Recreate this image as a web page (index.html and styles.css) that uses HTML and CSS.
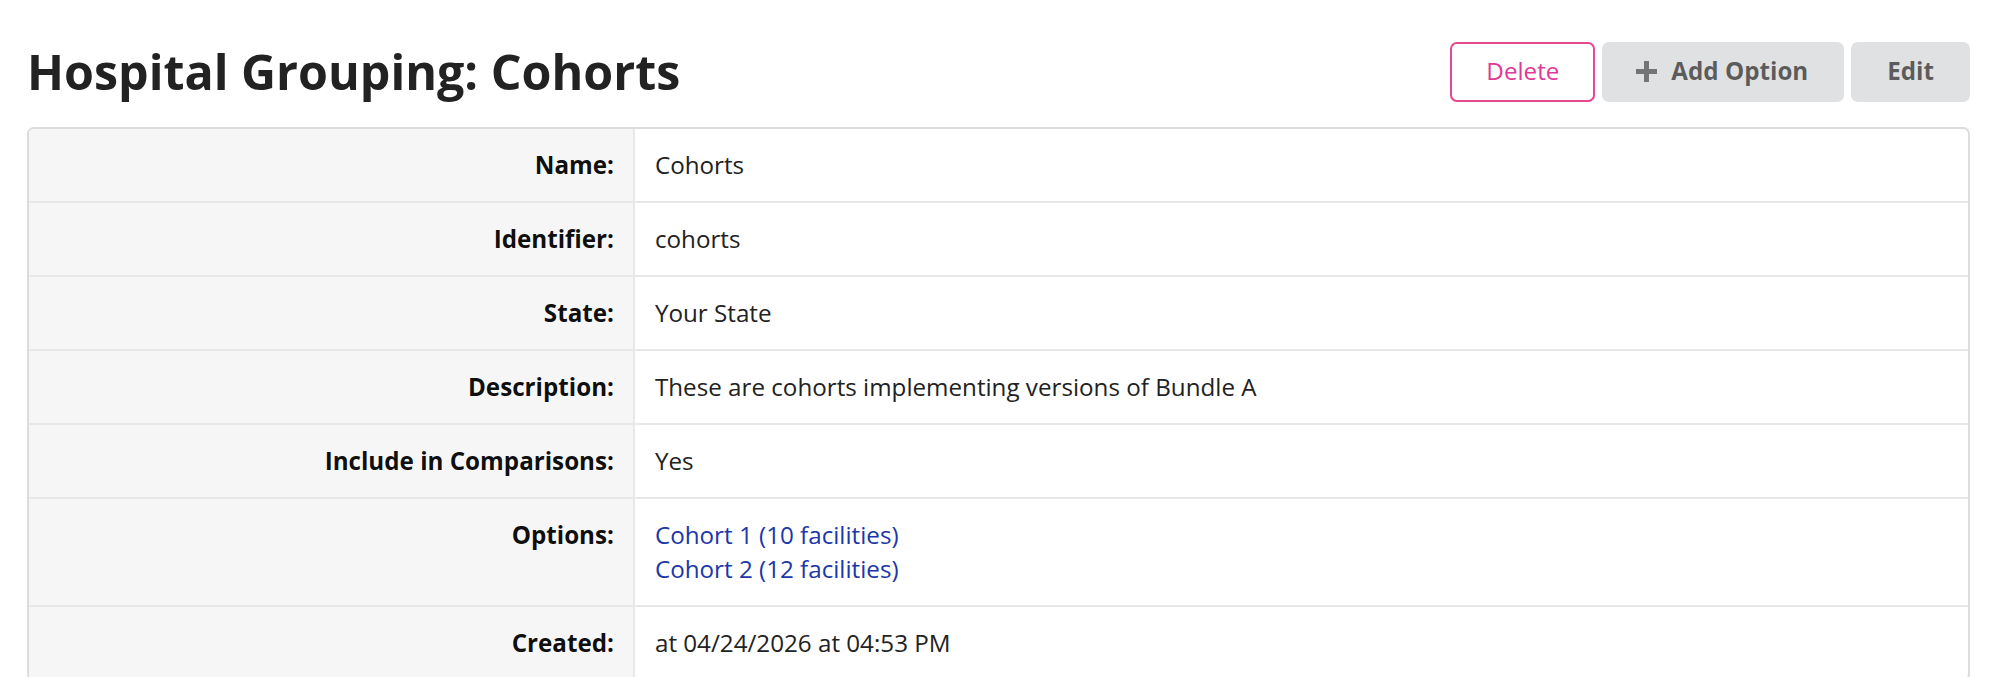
FILE: index.html
```html
<!DOCTYPE html>
<html lang="en">
<head>
<meta charset="utf-8">
<title>Hospital Grouping: Cohorts</title>
<link rel="stylesheet" href="styles.css">
</head>
<body>
<div class="page">
  <div class="page-header">
    <h1 class="title">Hospital Grouping: Cohorts</h1>
    <div class="actions">
      <button class="btn btn-basic-pink">Delete</button>
      <button class="btn btn-grey">
        <svg class="icon-plus" viewBox="0 0 22 22" aria-hidden="true"><path d="M8.4 0h5.2v8.4H22v5.2h-8.4V22H8.4v-8.4H0V8.4h8.4z" fill="currentColor"/></svg>
        Add Option
      </button>
      <button class="btn btn-grey">Edit</button>
    </div>
  </div>
  <table class="def-table">
    <tbody>
      <tr><th>Name:</th><td>Cohorts</td></tr>
      <tr><th>Identifier:</th><td>cohorts</td></tr>
      <tr><th>State:</th><td>Your State</td></tr>
      <tr><th>Description:</th><td>These are cohorts implementing versions of Bundle A</td></tr>
      <tr><th>Include in Comparisons:</th><td>Yes</td></tr>
      <tr><th>Options:</th><td><a href="#" class="link">Cohort 1 (10 facilities)</a><br><a href="#" class="link">Cohort 2 (12 facilities)</a></td></tr>
      <tr><th>Created:</th><td>at 04/24/2026 at 04:53 PM</td></tr>
    </tbody>
  </table>
</div>
</body>
</html>
```

FILE: styles.css
```css
html, body {
  margin: 0;
  padding: 0;
  background: #ffffff;
}
body {
  font-family: "Open Sans", "Liberation Sans", sans-serif;
  font-size: 24.2px;
  color: rgba(0, 0, 0, 0.87);
}
.page {
  padding: 41px 29px 0 27px;
}
.page-header {
  display: flex;
  align-items: center;
  justify-content: space-between;
  margin-bottom: 25px;
}
.title {
  margin: 0;
  font-size: 48.4px;
  font-weight: 700;
  line-height: 61px;
  color: #222222;
}
.actions {
  display: flex;
  gap: 7px;
}
.btn {
  display: inline-flex;
  align-items: center;
  height: 60px;
  padding: 0 36px;
  border: none;
  border-radius: 6.8px;
  font-family: "Open Sans", "Liberation Sans", sans-serif;
  font-size: 24.2px;
  line-height: 1;
  cursor: pointer;
}
.btn-basic-pink {
  background: #ffffff;
  color: #e03997;
  font-weight: 400;
  box-shadow: inset 0 0 0 2px #e8488f;
}
.btn-grey {
  background: #e0e1e2;
  color: rgba(0, 0, 0, 0.6);
  font-weight: 700;
}
.icon-plus {
  width: 21px;
  height: 21px;
  margin: 0 14px 0 -2px;
  opacity: 0.8;
}
.def-table {
  width: 100%;
  border-collapse: separate;
  border-spacing: 0;
  border: 2px solid #dcdcdd;
  border-radius: 6.8px;
  overflow: hidden;
}
.def-table th,
.def-table td {
  padding: 19px 19px;
  line-height: 34px;
  vertical-align: top;
  border-top: 2px solid #e8e8e9;
}
.def-table tr:first-child th,
.def-table tr:first-child td {
  border-top: none;
}
.def-table th {
  width: 31.25%;
  box-sizing: border-box;
  text-align: right;
  font-weight: 700;
  color: rgba(0, 0, 0, 0.95);
  background: #f6f6f6;
  border-right: 2px solid #e8e8e9;
}
.def-table td {
  padding-left: 20px;
  text-align: left;
  font-weight: 400;
  color: #222222;
}
.link {
  color: #1b37a8;
  text-decoration: none;
}
```
